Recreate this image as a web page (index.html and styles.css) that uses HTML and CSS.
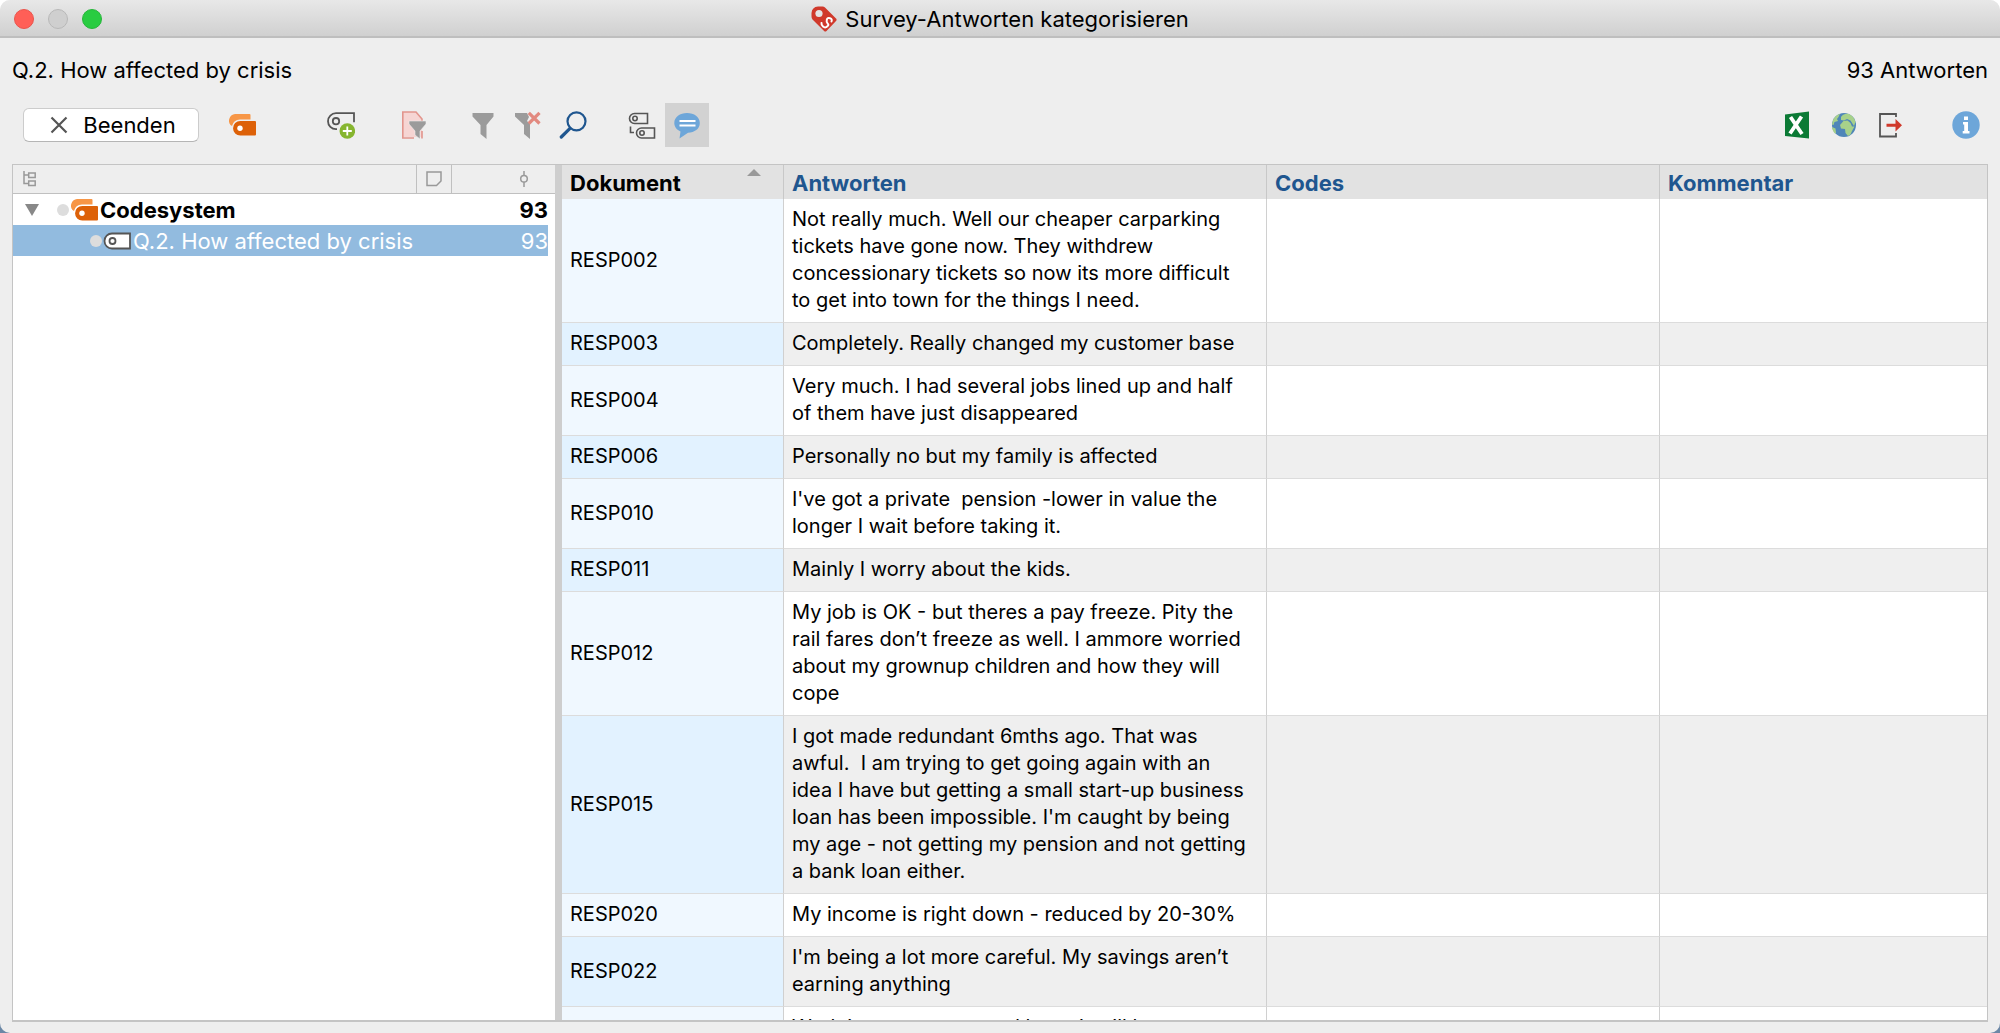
FILE: index.html
```html
<!DOCTYPE html>
<html lang="de">
<head>
<meta charset="utf-8">
<title>Survey-Antworten kategorisieren</title>
<link rel="stylesheet" href="styles.css">
</head>
<body>
<svg class="defs" aria-hidden="true">
  <symbol id="codes" viewBox="0 0 28 28">
    <path fill="#f79646" d="M7 3h14.500q1 0 1 1v4.500H12a8.500 8.500 0 0 0-8 6.500L2.500 14A6.800 6.800 0 0 1 7 3z"/>
    <path fill="#dd6108" d="M12.300 10H27a1 1 0 0 1 1 1v12.500a1 1 0 0 1-1 1H12.300a7.200 7.200 0 0 1 0-14.500z"/>
    <circle cx="12" cy="17.200" r="2.700" fill="#fff"/>
  </symbol>
</svg>
<div class="window">
  <header class="titlebar">
    <div class="lights">
      <button class="light close" aria-label="Schließen"></button>
      <button class="light minimize" aria-label="Minimieren"></button>
      <button class="light maximize" aria-label="Maximieren"></button>
    </div>
    <svg class="app-icon" viewBox="0 0 26 26" aria-hidden="true">
      <path fill="#d0392b" d="M7 .5h4.500q1.500 0 2.500 1L25 12.500q1.200 1.200 0 2.500l-9.500 10q-1.200 1-2.400 0L1.500 13.500Q.4 12 .5 10V7Q1 1 7 .5z"/>
      <circle cx="8" cy="7.500" r="3.600" fill="#e4e4e4"/>
      <path fill="none" stroke="#fff" stroke-width="2" stroke-linecap="round" stroke-linejoin="round" d="M20.500 15.500q1-2.500-1.500-3.300t-3.200 1.600 1 4-1.500 3.200q-1.500 1-3.300-.5T10.500 17"/>
    </svg>
    <h1 class="title">Survey-Antworten kategorisieren</h1>
  </header>

  <div class="summary">
    <span>Q.2. How affected by crisis</span>
    <span>93 Antworten</span>
  </div>

  <div class="toolbar">
    <button class="finish">
      <svg class="cross" viewBox="0 0 18 18" aria-hidden="true"><path d="M1.500 1.500l15 15M16.500 1.500l-15 15" stroke="#555" stroke-width="2.200" fill="none"/></svg>
      Beenden
    </button>
    <div class="group wide">
      <button class="tool" aria-label="Codes"><svg viewBox="0 0 28 28"><use href="#codes"/></svg></button>
    </div>
    <div class="group">
      <button class="tool" aria-label="Neuer Code"><svg viewBox="0 0 28 28">
        <path fill="none" stroke="#555" stroke-width="1.800" d="M10 18.200H9a8 8 0 0 1 0-16h18v9"/>
        <circle cx="9" cy="10.200" r="3.200" fill="none" stroke="#555" stroke-width="1.800"/>
        <circle cx="20.300" cy="20" r="7.800" fill="#86b52f"/>
        <path stroke="#fff" stroke-width="1.800" d="M15.800 20h9M20.300 15.500v9"/></svg></button>
    </div>
    <div class="group">
      <button class="tool" aria-label="Dokument filtern"><svg viewBox="0 0 28 28">
        <path fill="#f6d5d3" d="M4.800 1H18l6 7v18H4.800z"/>
        <path fill="none" stroke="#e2958d" stroke-width="1.600" d="M4 27h12M4.800 27V1H18l6 7v2M24 20v7.500"/>
        <path fill="#9b9b9b" stroke="#eee" stroke-width=".6" d="M11 10h17v3l-6 7v8l-5-4v-4l-6-7z"/></svg></button>
    </div>
    <div class="group">
      <button class="tool" aria-label="Filter"><svg viewBox="0 0 28 28">
        <path fill="#9b9b9b" d="M3.500 2h21v3.500L17.500 14v14l-6-5v-9l-8-8.500z"/></svg></button>
      <button class="tool" aria-label="Filter zurücksetzen"><svg viewBox="0 0 28 28">
        <path fill="#9b9b9b" d="M1 2h12l2 4-2 4 3 3v15l-6-5v-9L1 5.500z"/>
        <path stroke="#e2897f" stroke-width="3.200" d="M14.800 1.800L25.500 12.500M25.500 1.800L14.800 12.500"/></svg></button>
      <button class="tool" aria-label="Suchen"><svg viewBox="0 0 28 28">
        <circle cx="17.500" cy="10.300" r="9" fill="none" stroke="#1f568f" stroke-width="2.200"/>
        <path stroke="#1f568f" stroke-width="3.200" stroke-linecap="round" d="M2.300 26L11 17.300"/></svg></button>
    </div>
    <div class="group view">
      <button class="tool" aria-label="Codes anzeigen"><svg viewBox="0 0 28 28">
        <g fill="none" stroke="#555" stroke-width="1.600"><path d="M6.500 2.500h13v10h-13a5 5 0 0 1 0-10zM13.500 17h13v10h-13a5 5 0 0 1 0-10z"/><circle cx="7" cy="7.500" r="2.200"/><circle cx="14" cy="22" r="2.200"/><path d="M2.500 15.500v6H6"/></g></svg></button>
      <button class="tool active" aria-label="Kommentare"><svg viewBox="0 0 28 28">
        <path fill="#6da6d9" d="M14 2c7.200 0 12.800 4 12.800 10S21.500 21.500 15 21.700L6.500 27.500l1-7C4 19 1.300 16 1.300 12 1.300 6 7 2 14 2z"/>
        <path stroke="#fff" stroke-width="1.800" d="M6.500 10h16M6.500 14.500h16"/></svg></button>
    </div>
    <div class="group right">
      <button class="tool" aria-label="Excel"><svg viewBox="0 0 28 28">
        <path fill="#0b7a35" d="M2 3.500L26 .500v27L2 25z"/>
        <path stroke="#fff" stroke-width="3.800" d="M7.500 6l11.500 17M18.500 5.500L7 22.500"/></svg></button>
      <button class="tool" aria-label="HTML"><svg viewBox="0 0 28 28">
        <circle cx="14" cy="14" r="12" fill="#4f86b8"/>
        <path fill="#a7d18a" d="M3 9c1.500-3 4-5.500 7-6.300L8.500 6 7 8l1 2-3.500 1L3.500 14 2 13.500zM11 6c2-3 5-3.500 8-3 3.500 1.500 5.500 4.500 6.500 8L24 15l-3.500-5.500L17 8l-3 1.500-3-.500zM10 14l3.500-4 4-.500 3 2.500 1.500 3.500h2.500L22 20l-1.500 3.500L18 25l-2.500-3-.500-4-4-.5zM2 16l3.500 1.500L6 22l-1 .5C3.500 21 2.300 19 2 16z"/></svg></button>
      <button class="tool" aria-label="Exportieren"><svg viewBox="0 0 28 28">
        <path fill="none" stroke="#555" stroke-width="1.800" d="M19 6V3H3v22.500h16V22"/>
        <path fill="#d0392b" d="M9.500 12.800h9V8l6.500 6.300-6.500 6.300v-4.800h-9z"/></svg></button>
    </div>
    <div class="group">
      <button class="tool" aria-label="Info"><svg viewBox="0 0 28 28">
        <circle cx="14" cy="14" r="13.700" fill="#6da6d9"/>
        <path fill="#fff" d="M12 5.500h4v3.500h-4zM11 11h5v9h1.500v2.500h-6.800V20h1.500v-6.500H11z"/></svg></button>
    </div>
  </div>

  <main class="panes">
    <section class="tree">
      <div class="tree-head">
        <div class="head-name"><svg width="14" height="16" viewBox="0 0 14 16"><path fill="none" stroke="#999" stroke-width="1.500" d="M1 0v12.500h4M1 4h4M5.700 2h6.500v4.500H5.700zM5.700 10h6.500v4.500H5.700z"/></svg></div>
        <div class="head-memo"><svg width="16" height="16" viewBox="0 0 16 16"><path fill="none" stroke="#999" stroke-width="1.500" d="M1 1h14v9l-4.500 4.500H1z"/></svg></div>
        <div class="head-count"><svg width="10" height="16" viewBox="0 0 10 16"><path fill="none" stroke="#999" stroke-width="1.500" d="M5 0v4.500M5 11v5"/><circle cx="5" cy="7.700" r="3.300" fill="none" stroke="#999" stroke-width="1.500"/></svg></div>
      </div>
      <ul class="tree-list">
        <li class="node root">
          <svg class="arrow" viewBox="0 0 14 12"><path fill="#888" d="M0 0h14L7 12z"/></svg>
          <span class="dot"></span>
          <svg class="node-icon" viewBox="0 0 28 28"><use href="#codes"/></svg>
          <span class="name">Codesystem</span><span class="count">93</span>
        </li>
        <li class="node child">
          <span class="dot"></span>
          <svg class="node-icon" viewBox="0 0 28 28"><path fill="#fff" stroke="#555" stroke-width="1.800" d="M9 6.500h18v15H9a7.500 7.500 0 0 1 0-15z"/><circle cx="9.500" cy="14" r="3" fill="none" stroke="#555" stroke-width="1.800"/></svg>
          <span class="name">Q.2. How affected by crisis</span><span class="count">93</span>
        </li>
      </ul>
    </section>
    <div class="splitter"></div>
    <section class="answers">
      <table>
        <colgroup><col class="c-doc"><col class="c-answer"><col class="c-codes"><col class="c-comment"></colgroup>
        <thead><tr><th class="sorted"><div class="sort">Dokument<svg width="14" height="7" viewBox="0 0 14 7"><path fill="#999" d="M7 0l7 7H0z"/></svg></div></th><th>Antworten</th><th>Codes</th><th>Kommentar</th></tr></thead>
        <tbody>
          <tr><td>RESP002</td><td>Not really much. Well our cheaper carparking tickets have gone now. They withdrew concessionary tickets so now its more difficult<br>to get into town for the things I need.</td><td></td><td></td></tr>
          <tr><td>RESP003</td><td>Completely. Really changed my customer base</td><td></td><td></td></tr>
          <tr><td>RESP004</td><td>Very much. I had several jobs lined up and half<br>of them have just disappeared</td><td></td><td></td></tr>
          <tr><td>RESP006</td><td>Personally no but my family is affected</td><td></td><td></td></tr>
          <tr><td>RESP010</td><td>I've got a private  pension -lower in value the longer I wait before taking it.</td><td></td><td></td></tr>
          <tr><td>RESP011</td><td>Mainly I worry about the kids.</td><td></td><td></td></tr>
          <tr><td>RESP012</td><td>My job is OK - but theres a pay freeze. Pity the rail fares don’t freeze as well. I ammore worried about my grownup children and how they will cope</td><td></td><td></td></tr>
          <tr><td>RESP015</td><td>I got made redundant 6mths ago. That was<br>awful.  I am trying to get going again with an<br>idea I have but getting a small start-up business<br>loan has been impossible. I'm caught by being<br>my age - not getting my pension and not getting<br>a bank loan either.</td><td></td><td></td></tr>
          <tr><td>RESP020</td><td>My income is right down - reduced by 20-30%</td><td></td><td></td></tr>
          <tr><td>RESP022</td><td>I'm being a lot more careful. My savings aren’t earning anything</td><td></td><td></td></tr>
          <tr><td></td><td>Work is very scarce and hope it will be more or</td><td></td><td></td></tr>
        </tbody>
      </table>
    </section>
  </main>
</div>
</body>
</html>
```
FILE: styles.css
```css
* { box-sizing: border-box; }

body {
  margin: 0;
  background: linear-gradient(#fff 50%, #6b87a6 50%);
  color: #000;
  font: 22px/28px Inter, "Liberation Sans", sans-serif;
}

button { margin: 0; padding: 0; border: 0; background: none; color: inherit; font: inherit; }
svg { display: block; flex: none; }
.defs { position: absolute; width: 0; height: 0; }

.window {
  display: flex;
  flex-direction: column;
  height: 100vh;
  padding-bottom: 11px;
  overflow: hidden;
  border-radius: 10px;
  background: #eee;
}

.titlebar {
  display: grid;
  grid-template-columns: 1fr auto auto 1fr;
  align-items: center;
  flex: none;
  column-gap: 8px;
  height: 38px;
  padding: 2px 14px 0;
  border-bottom: 2px solid #bebebe;
  background: linear-gradient(#e8e8e8, #d0d0d0);
}
.lights { display: flex; gap: 14px; }
.light { width: 20px; height: 20px; border: 1px solid; border-radius: 50%; }
.close { border-color: #e9544c; background: #ff5f57; }
.minimize { border-color: #b8b8b8; background: #cfcfcf; }
.maximize { border-color: #27b53a; background: #29cc41; }
.app-icon { width: 26px; height: 26px; }
.title { margin: 0; font-size: 22px; font-weight: 400; }

.summary {
  display: flex;
  justify-content: space-between;
  flex: none;
  padding: 18px 12px 19px;
}

.toolbar {
  display: flex;
  align-items: center;
  flex: none;
  gap: 27px;
  height: 44px;
  margin-bottom: 17px;
  padding: 0 12px 0 23px;
}
.finish {
  display: flex;
  align-items: center;
  justify-content: center;
  gap: 15px;
  width: 176px;
  height: 34px;
  padding-left: 4px;
  border: 1px solid #ccc;
  border-bottom-color: #b5b5b5;
  border-radius: 6px;
  background: #fff;
}
.cross { width: 18px; height: 18px; }
.group { display: flex; gap: 1px; }
.group.wide { margin: 0 28px 0 -6px; }
.group.view { margin-left: -2px; }
.group.right { margin: 0 4px 0 auto; gap: 3px; }
.tool { display: grid; place-items: center; width: 44px; height: 44px; }
.tool svg { width: 28px; height: 28px; }
.tool.active { background: #d2d2d2; }

.panes {
  display: grid;
  grid-template-columns: 542px 7px 1fr;
  flex: 1;
  min-height: 0;
  margin: 0 12px;
  border: 1px solid #c4c4c4;
  border-bottom-width: 2px;
}
.tree { background: #fff; }
.tree-head {
  display: grid;
  grid-template-columns: 1fr 35px 103px;
  height: 29px;
  border-bottom: 1px solid #c0c0c0;
  background: #eee;
}
.tree-head > div { display: flex; align-items: center; border-right: 1px solid #c0c0c0; }
.tree-head .head-name { padding-left: 10px; }
.tree-head .head-memo { justify-content: center; }
.tree-head .head-count { justify-content: end; padding-right: 26px; border-right: 0; }
.tree-list { margin: 0; padding: 0 7px 0 0; list-style: none; }
.node { display: flex; align-items: center; height: 31px; }
.root { padding-left: 12px; font-weight: 700; }
.child { padding-left: 77px; background: #92bbdf; color: #fff; }
.arrow { width: 14px; height: 12px; margin-right: 18px; }
.dot { width: 12px; height: 12px; border-radius: 50%; background: #ddd; }
.node-icon { width: 28px; height: 28px; margin: 0 2px 0 1px; }
.name { flex: 1; }

.splitter { background: #cecece; }

.answers { overflow: hidden; background: #fff; }
table { width: 100%; table-layout: fixed; border-collapse: separate; border-spacing: 0; }
.c-doc { width: 222px; }
.c-codes { width: 393px; }
.c-comment { width: 327px; }
th {
  height: 34px;
  padding: 4px 8px 2px;
  border-right: 1px solid #c8c8c8;
  background: #e2e2e2;
  color: #1f568f;
  text-align: left;
}
th.sorted { color: #000; }
.sort { display: flex; justify-content: space-between; padding-right: 14px; }
td {
  padding: 7px 4px 8px 8px;
  border-right: 1px solid #d0d0d0;
  border-bottom: 1px solid #dcdcdc;
  font-size: 20px;
  line-height: 27px;
  white-space: pre-wrap;
}
th:last-child, td:last-child { border-right: 0; }
td:first-child { background: #f0f8ff; }
tr:nth-child(even) td { background: #efefef; }
tr:nth-child(even) td:first-child { background: #e2f2ff; }
```
